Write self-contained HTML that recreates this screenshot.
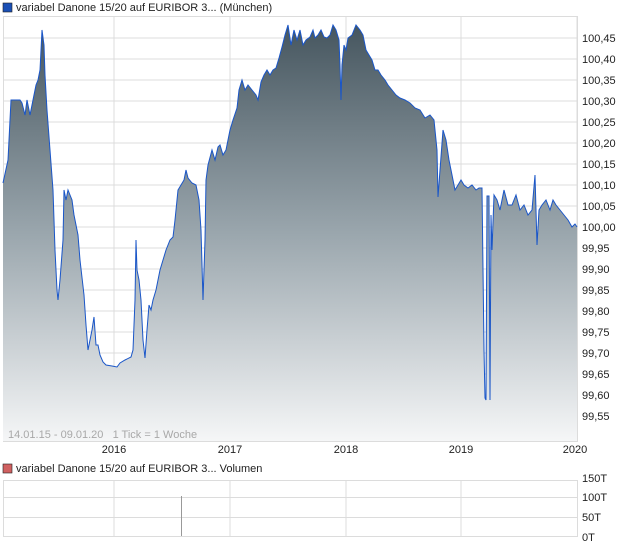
<!DOCTYPE html>
<html><head><meta charset="utf-8"><style>
body{margin:0;background:#fff;width:620px;height:546px;overflow:hidden;font-family:"Liberation Sans",sans-serif}
</style></head><body>
<svg width="620" height="546" xmlns="http://www.w3.org/2000/svg" font-family="Liberation Sans, sans-serif" font-size="11">
<defs><linearGradient id="g" x1="0" y1="0" x2="0" y2="1" gradientUnits="objectBoundingBox">
<stop offset="0" stop-color="#46565f"/><stop offset="0.5" stop-color="#9aa6ad"/><stop offset="1" stop-color="#f5f6f7"/></linearGradient></defs>
<rect x="3" y="3" width="9" height="9" fill="#1a4fb5" stroke="#222" stroke-width="0.6"/>
<text x="16" y="11" fill="#222">variabel Danone 15/20 auf EURIBOR 3... (München)</text>
<g stroke="#dcdcdc" stroke-width="1">
<line x1="3" y1="38" x2="577" y2="38"/><line x1="3" y1="59" x2="577" y2="59"/><line x1="3" y1="80" x2="577" y2="80"/><line x1="3" y1="101" x2="577" y2="101"/><line x1="3" y1="122" x2="577" y2="122"/><line x1="3" y1="143" x2="577" y2="143"/><line x1="3" y1="164" x2="577" y2="164"/><line x1="3" y1="185" x2="577" y2="185"/><line x1="3" y1="206" x2="577" y2="206"/><line x1="3" y1="227" x2="577" y2="227"/><line x1="3" y1="248" x2="577" y2="248"/><line x1="3" y1="269" x2="577" y2="269"/><line x1="3" y1="290" x2="577" y2="290"/><line x1="3" y1="311" x2="577" y2="311"/><line x1="3" y1="332" x2="577" y2="332"/><line x1="3" y1="353" x2="577" y2="353"/><line x1="3" y1="374" x2="577" y2="374"/><line x1="3" y1="395" x2="577" y2="395"/><line x1="3" y1="416" x2="577" y2="416"/>
<line x1="114" y1="16" x2="114" y2="441"/><line x1="230" y1="16" x2="230" y2="441"/><line x1="346" y1="16" x2="346" y2="441"/><line x1="461" y1="16" x2="461" y2="441"/><line x1="577" y1="16" x2="577" y2="441"/>
</g>
<rect x="3.5" y="16.5" width="574" height="425" fill="none" stroke="#dcdcdc"/>
<path id="p" fill="url(#g)" stroke="none" d="M3,183 L8,160 L11,100 L20,100 L22,103 L25,115 L27,100 L30,115 L33,100 L36,85 L38,80 L40,70 L42,30 L44,45 L45,75 L47,110 L50,150 L53,190 L55,250 L57,290 L58,300 L60,280 L63,240 L64,190 L66,200 L68,190 L70,195 L72,200 L74,215 L76,225 L78,235 L80,260 L84,295 L86,325 L88,350 L90,340 L92,330 L94,317 L96,345 L98,345 L100,355 L103,362 L106,365 L112,366 L117,367 L120,363 L125,360 L131,357 L133,350 L135,300 L136,240 L137,270 L139,280 L141,300 L143,340 L145,358 L147,330 L149,305 L151,310 L153,300 L156,290 L160,270 L163,260 L166,250 L170,240 L173,237 L175,220 L178,190 L181,185 L184,180 L186,170 L188,178 L192,183 L196,185 L199,200 L201,230 L203,300 L205,240 L206,180 L208,165 L212,150 L215,160 L218,147 L220,145 L223,155 L226,150 L230,130 L233,120 L237,108 L239,90 L242,80 L245,90 L248,85 L252,90 L256,95 L258,100 L261,82 L264,75 L267,70 L270,75 L273,70 L276,68 L279,58 L282,47 L285,35 L288,25 L291,45 L294,30 L297,40 L300,30 L303,45 L306,40 L310,37 L313,30 L315,38 L318,35 L321,30 L324,37 L327,38 L330,35 L333,25 L336,30 L339,40 L340,65 L341,100 L342,65 L344,45 L346,50 L348,38 L352,35 L356,25 L360,30 L363,35 L366,50 L369,55 L372,60 L375,70 L378,70 L381,75 L385,80 L388,85 L392,90 L396,95 L400,98 L405,100 L410,103 L415,108 L420,110 L425,118 L430,115 L434,120 L437,150 L438,197 L440,170 L443,130 L446,140 L449,160 L452,175 L455,190 L458,185 L461,180 L464,185 L468,188 L472,185 L476,190 L479,188 L482,188 L484,350 L485,398 L486,400 L487,196 L489,196 L490,400 L491,215 L492,250 L494,195 L497,200 L500,210 L504,190 L508,205 L512,205 L516,195 L520,210 L524,205 L528,215 L532,210 L535,175 L537,245 L539,210 L542,205 L546,200 L550,210 L553,200 L556,205 L560,210 L564,215 L568,220 L572,227 L575,224 L577,227 L577,441 L3,441 Z"/>
<path fill="none" stroke="#1a56c8" stroke-width="1" d="M3,183 L8,160 L11,100 L20,100 L22,103 L25,115 L27,100 L30,115 L33,100 L36,85 L38,80 L40,70 L42,30 L44,45 L45,75 L47,110 L50,150 L53,190 L55,250 L57,290 L58,300 L60,280 L63,240 L64,190 L66,200 L68,190 L70,195 L72,200 L74,215 L76,225 L78,235 L80,260 L84,295 L86,325 L88,350 L90,340 L92,330 L94,317 L96,345 L98,345 L100,355 L103,362 L106,365 L112,366 L117,367 L120,363 L125,360 L131,357 L133,350 L135,300 L136,240 L137,270 L139,280 L141,300 L143,340 L145,358 L147,330 L149,305 L151,310 L153,300 L156,290 L160,270 L163,260 L166,250 L170,240 L173,237 L175,220 L178,190 L181,185 L184,180 L186,170 L188,178 L192,183 L196,185 L199,200 L201,230 L203,300 L205,240 L206,180 L208,165 L212,150 L215,160 L218,147 L220,145 L223,155 L226,150 L230,130 L233,120 L237,108 L239,90 L242,80 L245,90 L248,85 L252,90 L256,95 L258,100 L261,82 L264,75 L267,70 L270,75 L273,70 L276,68 L279,58 L282,47 L285,35 L288,25 L291,45 L294,30 L297,40 L300,30 L303,45 L306,40 L310,37 L313,30 L315,38 L318,35 L321,30 L324,37 L327,38 L330,35 L333,25 L336,30 L339,40 L340,65 L341,100 L342,65 L344,45 L346,50 L348,38 L352,35 L356,25 L360,30 L363,35 L366,50 L369,55 L372,60 L375,70 L378,70 L381,75 L385,80 L388,85 L392,90 L396,95 L400,98 L405,100 L410,103 L415,108 L420,110 L425,118 L430,115 L434,120 L437,150 L438,197 L440,170 L443,130 L446,140 L449,160 L452,175 L455,190 L458,185 L461,180 L464,185 L468,188 L472,185 L476,190 L479,188 L482,188 L484,350 L485,398 L486,400 L487,196 L489,196 L490,400 L491,215 L492,250 L494,195 L497,200 L500,210 L504,190 L508,205 L512,205 L516,195 L520,210 L524,205 L528,215 L532,210 L535,175 L537,245 L539,210 L542,205 L546,200 L550,210 L553,200 L556,205 L560,210 L564,215 L568,220 L572,227 L575,224 L577,227"/>
<text x="8" y="438" fill="#a8a8a8" xml:space="preserve" style="white-space:pre">14.01.15 - 09.01.20   1 Tick = 1 Woche</text>
<g fill="#222" text-anchor="start">
<text x="582" y="42">100,45</text><text x="582" y="63">100,40</text><text x="582" y="84">100,35</text><text x="582" y="105">100,30</text><text x="582" y="126">100,25</text><text x="582" y="147">100,20</text><text x="582" y="168">100,15</text><text x="582" y="189">100,10</text><text x="582" y="210">100,05</text><text x="582" y="231">100,00</text><text x="582" y="252">99,95</text><text x="582" y="273">99,90</text><text x="582" y="294">99,85</text><text x="582" y="315">99,80</text><text x="582" y="336">99,75</text><text x="582" y="357">99,70</text><text x="582" y="378">99,65</text><text x="582" y="399">99,60</text><text x="582" y="420">99,55</text>
</g>
<g fill="#222" text-anchor="middle">
<text x="114" y="453">2016</text><text x="230" y="453">2017</text><text x="346" y="453">2018</text><text x="461" y="453">2019</text><text x="575" y="453">2020</text>
</g>
<rect x="3" y="464" width="9" height="9" fill="#d06060" stroke="#222" stroke-width="0.6"/>
<text x="16" y="472" fill="#222">variabel Danone 15/20 auf EURIBOR 3... Volumen</text>
<g stroke="#dcdcdc">
<line x1="3" y1="497.5" x2="577" y2="497.5"/><line x1="3" y1="517.5" x2="577" y2="517.5"/>
<line x1="114" y1="480" x2="114" y2="536"/><line x1="230" y1="480" x2="230" y2="536"/><line x1="346" y1="480" x2="346" y2="536"/><line x1="461" y1="480" x2="461" y2="536"/>
</g>
<rect x="3.5" y="480.5" width="574" height="56" fill="none" stroke="#dcdcdc"/>
<line x1="181.5" y1="496" x2="181.5" y2="536" stroke="#999"/>
<g fill="#222"><text x="582" y="482">150T</text><text x="582" y="501">100T</text><text x="582" y="521">50T</text><text x="582" y="541">0T</text></g>
</svg>
</body></html>
